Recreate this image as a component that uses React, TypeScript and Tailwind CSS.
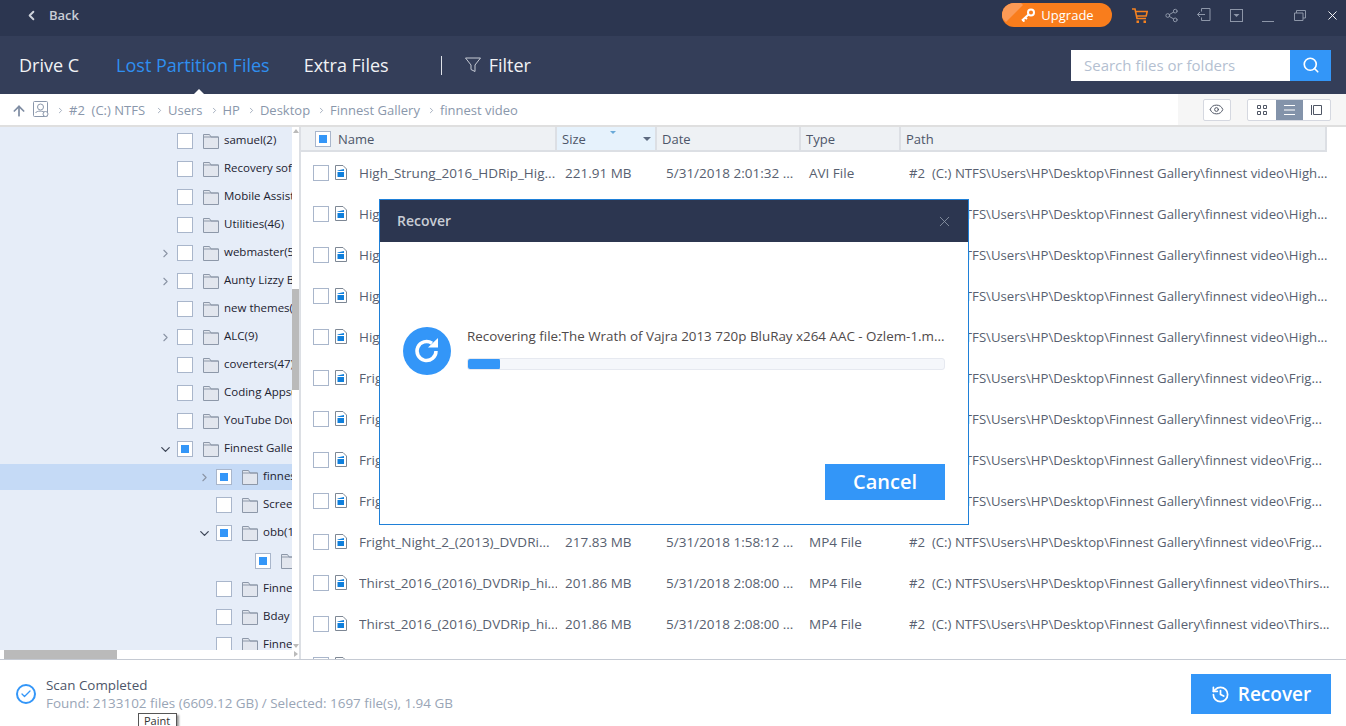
import { ChevronDown, ChevronLeft, ChevronRight, Eye, History, Search, Share2, X, ArrowUp, Check } from "lucide-react"

const font = "font-['Open_Sans',sans-serif]"

const crumbs = ["#2  (C:) NTFS", "Users", "HP", "Desktop", "Finnest Gallery", "finnest video"]

type TreeRow = { label: string; depth: 0 | 1 | 2; arrow?: "right" | "down"; checked?: boolean; selected?: boolean }

const tree: TreeRow[] = [
  { label: "samuel(2)", depth: 0 },
  { label: "Recovery software(12)", depth: 0 },
  { label: "Mobile Assistant(8)", depth: 0 },
  { label: "Utilities(46)", depth: 0 },
  { label: "webmaster(53)", depth: 0, arrow: "right" },
  { label: "Aunty Lizzy Birthday", depth: 0, arrow: "right" },
  { label: "new themes(14)", depth: 0 },
  { label: "ALC(9)", depth: 0, arrow: "right" },
  { label: "coverters(47)", depth: 0 },
  { label: "Coding Apps(21)", depth: 0 },
  { label: "YouTube Downloads(6)", depth: 0 },
  { label: "Finnest Gallery(1697)", depth: 0, arrow: "down", checked: true },
  { label: "finnest video(62)", depth: 1, arrow: "right", checked: true, selected: true },
  { label: "Screenshots(31)", depth: 1 },
  { label: "obb(11)", depth: 1, arrow: "down", checked: true },
  { label: "data(11)", depth: 2, checked: true },
  { label: "Finnest pics(40)", depth: 1 },
  { label: "Bday", depth: 1 },
  { label: "Finnest old(9)", depth: 1 },
]

const depthPad = { 0: "pl-[160px]", 1: "pl-[199px]", 2: "pl-[238px]" }

const high = { name: "High_Strung_2016_HDRip_Hig...", size: "221.91 MB", date: "5/31/2018 2:01:32 ...", type: "AVI File", tail: "High..." }
const fright = { name: "Fright_Night_2_(2013)_DVDRi...", size: "217.83 MB", date: "5/31/2018 1:58:12 ...", type: "MP4 File", tail: "Frig..." }
const thirst = { name: "Thirst_2016_(2016)_DVDRip_hi...", size: "201.86 MB", date: "5/31/2018 2:08:00 ...", type: "MP4 File", tail: "Thirs..." }
const files = [high, high, high, high, high, fright, fright, fright, fright, fright, thirst, thirst, thirst]

function Box({ checked, className = "" }: { checked?: boolean; className?: string }) {
  return (
    <span className={`flex h-[16px] w-[16px] shrink-0 items-center justify-center border border-[#a9b6cb] bg-white ${className}`}>
      {checked && <span className="h-[8px] w-[8px] bg-[#3396f8]" />}
    </span>
  )
}

function FolderIcon() {
  return (
    <svg width="16" height="15" viewBox="0 0 16 15" className="shrink-0">
      <path d="M.5 14.500V.5h6l1.500 2.500h7.500v11.500z" fill="#e2e6ee" stroke="#8d98a9" />
      <path d="M.5 3h15" stroke="#8d98a9" fill="none" />
    </svg>
  )
}

function FileIcon() {
  return (
    <svg width="12" height="15" viewBox="0 0 12 15" className="shrink-0">
      <path d="M.5.5h7.500l3.500 3.500v10.500h-11z" fill="#fff" stroke="#7d8794" />
      <path d="M2.500 5.500L9 4v2H2.500zM2.500 7h6.500v5H2.500z" fill="#0f7fdc" />
    </svg>
  )
}

function TreeItem({ row }: { row: TreeRow }) {
  return (
    <div className={`flex shrink-0 items-center whitespace-nowrap ${depthPad[row.depth]} ${row.selected ? "my-px h-[26px] bg-[#c5daf6]" : "h-[28px]"}`}>
      <span className="flex w-[17px] shrink-0 items-center">
        {row.arrow === "right" && <ChevronRight size={13} strokeWidth={2} className="-ml-px text-[#8a94a5]" />}
        {row.arrow === "down" && <ChevronDown size={15} strokeWidth={2} className="-ml-[2px] text-[#3e4658]" />}
      </span>
      <Box checked={row.checked} />
      <span className="ml-[10px]"><FolderIcon /></span>
      <span className="ml-[5px] pb-[2px] text-[11.5px] text-[#1c2230]">{row.label}</span>
    </div>
  )
}

function HeaderCell({ label, className = "" }: { label: string; className?: string }) {
  return <div className={`flex items-center border-r-2 border-[#dcdfe4] pl-[5px] pt-[2px] text-[13px] text-[#4d5669] ${className}`}>{label}</div>
}

export default function App() {
  return (
    <div className={`relative flex h-[726px] w-[1346px] flex-col overflow-hidden bg-white ${font}`}>
      {/* title bar */}
      <div className="flex h-[36px] shrink-0 items-center bg-[#2c3650] pb-[6px] pl-[24px]">
        <ChevronLeft size={15} strokeWidth={3} className="text-[#cfd3db]" />
        <span className="ml-[10px] pt-[2px] text-[13px] font-semibold text-[#c9cdd5]">Back</span>
        <div className="ml-auto flex items-center">
          <button className="relative flex h-[24px] w-[110px] items-center justify-center gap-[5px] overflow-hidden rounded-full bg-[#f97d1c] text-[13px] text-white">
            <span className="absolute -left-[8px] -top-[10px] h-[24px] w-[24px] rotate-45 bg-[#fb9a56]" />
            <svg width="16" height="14" viewBox="0 0 16 14" fill="none" stroke="#fff" strokeWidth="2" className="relative">
              <circle cx="11" cy="4.500" r="3" />
              <path d="M8.500 6.500L2 12.500M2.500 12l2 1.500M5 9.500l2 1.500" />
            </svg>
            <span className="relative pt-[2px]">Upgrade</span>
          </button>
          <svg width="16" height="15" viewBox="0 0 16 15" fill="none" stroke="#f58220" strokeWidth="1.600" className="ml-[20px]">
            <path d="M0 1h3l2 9.500h9M3.800 3.500h11.400l-1 4.500H5" />
            <rect x="4.500" y="12.500" width="2.500" height="2.500" fill="#f58220" stroke="none" />
            <rect x="11.500" y="12.500" width="2.500" height="2.500" fill="#f58220" stroke="none" />
          </svg>
          <Share2 size={15} strokeWidth={1.6} className="ml-[16px] text-[#8d96a8]" />
          <svg width="14" height="14" viewBox="0 0 14 14" fill="none" stroke="#8d96a8" className="ml-[18px]">
            <path d="M4.500 3.500V.5h8.500v12h-8.500v-3M8 6.500H.5M3 4L.5 6.500 3 9" />
          </svg>
          <svg width="13" height="13" viewBox="0 0 13 13" className="ml-[19px]">
            <rect x=".5" y=".5" width="12" height="12" fill="none" stroke="#8d96a8" />
            <path d="M3.500 5h6l-3 3z" fill="#8d96a8" />
          </svg>
          <span className="ml-[19px] mt-[13px] h-px w-[12px] bg-[#8d96a8]" />
          <svg width="12" height="11" viewBox="0 0 12 11" fill="none" stroke="#8d96a8" className="ml-[20px]">
            <path d="M.5 3h8.500v7.500h-8.500zM2.500 3V.5h9v7.500h-2.500" />
          </svg>
          <X size={15} strokeWidth={1.5} className="ml-[19px] mr-[6px] text-white" />
        </div>
      </div>

      {/* tabs */}
      <div className="flex h-[58px] shrink-0 items-center bg-[#343e59] pl-[19px] pr-[15px] text-[18px]">
        <span className="text-[#f1f2f5]">Drive C</span>
        <span className="relative ml-[37px] text-[#2f8ff0]">
          Lost Partition Files
          <span className="absolute -bottom-[17px] left-[76px] h-0 w-0 border-x-[7px] border-b-[7px] border-x-transparent border-b-white" />
        </span>
        <span className="ml-[34px] text-[#f1f2f5]">Extra Files</span>
        <span className="ml-[52px] h-[19px] w-px bg-[#dfe2e8]" />
        <svg width="16" height="16" viewBox="0 0 16 16" fill="none" stroke="#c6cbd5" className="ml-[23px]">
          <path d="M.5 1h15L10 8v6.500l-4-2V8z" />
        </svg>
        <span className="ml-[8px] text-[#f1f2f5]">Filter</span>
        <div className="ml-auto flex h-[31px]">
          <div className="flex w-[219px] items-center bg-white pl-[13px] text-[15px] text-[#b4bfd1]">Search files or folders</div>
          <div className="flex w-[41px] items-center justify-center bg-[#3396f8]">
            <Search size={18} strokeWidth={2.2} className="text-white" />
          </div>
        </div>
      </div>

      {/* breadcrumb */}
      <div className="flex h-[33px] shrink-0 items-center border-b-2 border-[#dfdfdf] pl-[11px] text-[13px] text-[#8a97ab]">
        <ArrowUp size={16} strokeWidth={2.6} className="mt-[2px] text-[#7f8da3]" />
        <svg width="16" height="17" viewBox="0 0 16 17" fill="none" stroke="#8a97ab" className="ml-[6px]">
          <rect x=".5" y=".5" width="14" height="15" rx="1" />
          <circle cx="7.500" cy="6" r="3" />
          <path d="M2.500 12c1-2.500 8-2.500 10 0" />
          <circle cx="12.500" cy="13" r="2.500" fill="#fff" />
        </svg>
        <div className="ml-[7px] mt-[2px] flex items-center">
          {crumbs.map((c, i) => (
            <span key={c} className="flex items-center whitespace-pre">
              <ChevronRight size={9} strokeWidth={2} className="mr-[4px]" />
              <span className={i === 0 ? "mr-[10px]" : i < crumbs.length - 1 ? "mr-[7px]" : ""}>{c}</span>
            </span>
          ))}
        </div>
        <div className="ml-auto flex h-full w-[168px] items-center bg-[#f6f6f6] pl-[25px] pr-[15px]">
          <div className="flex h-[22px] w-[28px] items-center justify-center rounded-[2px] border border-[#d5d8e0] bg-white">
            <Eye size={15} strokeWidth={1.6} className="text-[#4f5665]" />
          </div>
          <div className="ml-[16px] flex h-[22px] overflow-hidden rounded-[2px] border border-[#d5d8e0] bg-white">
            <div className="flex w-[28px] items-center justify-center">
              <svg width="10" height="10" viewBox="0 0 10 10" fill="none" stroke="#4f5665"><path d="M.5.5h3v3h-3zM6.500.5h3v3h-3zM.5 6.500h3v3h-3zM6.500 6.500h3v3h-3z" /></svg>
            </div>
            <div className="flex w-[28px] items-center justify-center bg-[#8393aa]">
              <svg width="11" height="10" viewBox="0 0 11 10" stroke="#fff"><path d="M0 .5h11M0 5h11M0 9.500h11" /></svg>
            </div>
            <div className="flex w-[27px] items-center justify-center">
              <svg width="11" height="10" viewBox="0 0 11 10" fill="none" stroke="#4f5665"><path d="M.5 0v10M2.500.5h8v9h-8z" /></svg>
            </div>
          </div>
        </div>
      </div>

      {/* main */}
      <div className="flex h-[533px] shrink-0 border-b border-[#c5cad3]">
        <div className="flex w-[301px] shrink-0 flex-col border-r-2 border-[#dcdfe4]">
          <div className="flex h-[523px] shrink-0">
            <div className="flex w-[292px] flex-col overflow-hidden bg-[#e6edf8]">
              {tree.map((row) => (
                <TreeItem key={row.label} row={row} />
              ))}
            </div>
            <div className="relative w-[7px] bg-white pt-[162px]">
              <span className="absolute left-[1px] top-[2px] h-0 w-0 border-x-[3px] border-b-[4px] border-x-transparent border-b-[#bababa]" />
              <div className="h-[101px] bg-[#bababa]" />
              <span className="absolute bottom-[2px] left-[1px] h-0 w-0 border-x-[3px] border-t-[4px] border-x-transparent border-t-[#bababa]" />
            </div>
          </div>
          <div className="flex h-[9px] items-stretch bg-white pl-[4px]">
            <div className="w-[113px] bg-[#bababa]" />
            <span className="ml-auto mr-[1px] mt-[1px] h-0 w-0 border-y-[3px] border-l-[4px] border-y-transparent border-l-[#bababa]" />
          </div>
        </div>

        <div className="flex min-w-0 flex-1 flex-col overflow-hidden">
          <div className="flex h-[25px] w-[1026px] shrink-0 border-b-2 border-[#dcdfe4] bg-[#eef1f4]">
            <div className="flex w-[256px] items-center border-r-2 border-[#dcdfe4] pl-[14px] text-[13px] text-[#4d5669]">
              <Box checked />
              <span className="ml-[7px] pt-[2px]">Name</span>
            </div>
            <div className="relative flex w-[100px] items-center border-r-2 border-[#dcdfe4] bg-[#e6f2fc] pl-[5px] pt-[2px] text-[13px] text-[#4d5669]">
              Size
              <span className="absolute left-[53px] top-[4px] h-0 w-0 border-x-[3px] border-t-[3px] border-x-transparent border-t-[#69a9d8]" />
              <span className="absolute right-[4px] top-[10px] h-0 w-0 border-x-[4px] border-t-[4px] border-x-transparent border-t-[#5d6a80]" />
            </div>
            <HeaderCell label="Date" className="w-[144px]" />
            <HeaderCell label="Type" className="w-[100px]" />
            <HeaderCell label="Path" className="flex-1" />
          </div>
          <div className="min-h-0 flex-1 pt-[1px]">
            {files.map((f, i) => (
              <div key={i} className="flex h-[41px] items-center whitespace-nowrap text-[13.5px] text-[#585f70]">
                <div className="flex w-[256px] shrink-0 items-center pl-[12px]">
                  <Box className="-mt-[2px]" />
                  <span className="-mt-[2px] ml-[6px]"><FileIcon /></span>
                  <span className="ml-[12px] overflow-hidden">{f.name}</span>
                </div>
                <div className="w-[100px] shrink-0 pl-[8px]">{f.size}</div>
                <div className="w-[144px] shrink-0 pl-[9px]">{f.date}</div>
                <div className="w-[100px] shrink-0 pl-[8px]">{f.type}</div>
                <div className="min-w-0 flex-1 whitespace-pre pl-[8px] text-[13.2px]">{`#2  (C:) NTFS\\Users\\HP\\Desktop\\Finnest Gallery\\finnest video\\${f.tail}`}</div>
              </div>
            ))}
          </div>
        </div>
      </div>

      {/* footer */}
      <div className="flex min-h-0 flex-1 items-center pl-[16px] pr-[15px] pt-[2px]">
        <span className="flex h-[20px] w-[20px] items-center justify-center rounded-full border-2 border-[#3396f8]">
          <Check size={12} strokeWidth={2.6} className="text-[#3396f8]" />
        </span>
        <div className="ml-[10px] leading-[18px]">
          <div className="text-[13.4px] text-[#4d5669]">Scan Completed</div>
          <div className="text-[13.45px] text-[#99a5b6]">Found: 2133102 files (6609.12 GB) / Selected: 1697 file(s), 1.94 GB</div>
        </div>
        <button className="ml-auto flex h-[40px] w-[140px] items-center justify-center gap-[8px] bg-[#3396f8] text-[19px] font-semibold text-white">
          <History size={19} strokeWidth={2.2} />
          Recover
        </button>
      </div>

      {/* tooltip from the desktop behind the app */}
      <div className="absolute left-[138px] top-[713px] h-[16px] w-[39px] border border-[#555] bg-white pl-[5px] text-[11px] leading-[14px] text-[#333] shadow-[2px_2px_2px_#999]">
        Paint
      </div>

      {/* modal */}
      <div className="absolute left-[379px] top-[199px] flex h-[326px] w-[590px] flex-col border border-[#1f80d8] bg-white">
        <div className="flex h-[42px] shrink-0 items-center justify-between bg-[#2c3650] pl-[17px] pr-[15px]">
          <span className="pb-[2px] text-[14px] font-semibold text-[#c9cdd5]">Recover</span>
          <X size={17} strokeWidth={1.2} className="text-[#8f98a8]" />
        </div>
        <div className="flex flex-1 flex-col pl-[23px] pr-[23px]">
          <div className="mt-[85px] flex items-start">
            <span className="flex h-[48px] w-[48px] shrink-0 items-center justify-center rounded-full bg-[#3396f8]">
              <svg width="30" height="30" viewBox="0 0 30 30" fill="none">
                <path d="M24 15a9.500 9.500 0 1 1-4-7.700" stroke="#fff" strokeWidth="3.500" />
                <path d="M16 11.500h10V2z" fill="#fff" />
              </svg>
            </span>
            <div className="ml-[16px] min-w-0 flex-1">
              <div className="whitespace-nowrap text-[13.4px] leading-[18px] text-[#4f4a4a]">Recovering file:The Wrath of Vajra 2013 720p BluRay x264 AAC - Ozlem-1.m...</div>
              <div className="mt-[13px] h-[12px] overflow-hidden rounded-[3px] border border-[#e6e9f0] bg-[#f5f7fb]">
                <div className="-m-px h-[12px] w-[33px] rounded-[3px] bg-[#3396f8]" />
              </div>
            </div>
          </div>
          <button className="ml-auto mt-[89px] h-[36px] w-[120px] bg-[#3396f8] text-[20px] font-semibold text-white">Cancel</button>
        </div>
      </div>
    </div>
  )
}
